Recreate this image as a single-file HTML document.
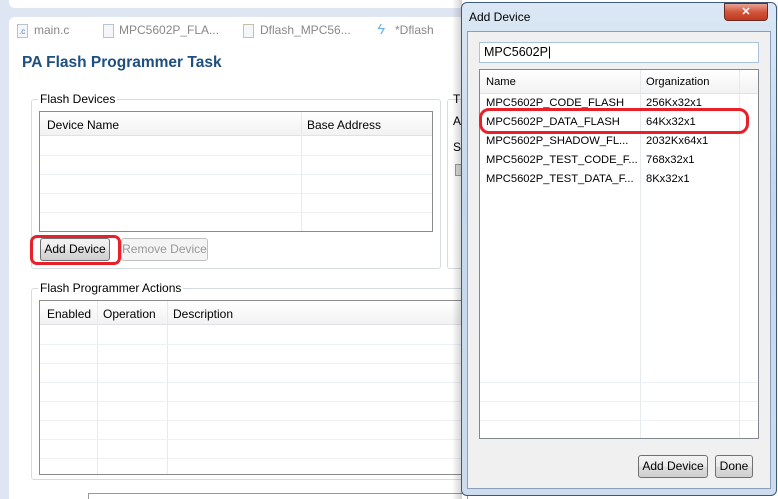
<!DOCTYPE html>
<html><head><style>
*{box-sizing:border-box;margin:0;padding:0}
html,body{width:778px;height:499px;overflow:hidden}
body{background:#dfe6f3;font-family:"Liberation Sans",sans-serif;font-size:12px;color:#000;position:relative}
.a{position:absolute}
.t{position:absolute;white-space:nowrap}
.grp{position:absolute;border:1px solid #d5dbe3;border-radius:3px}
.tbl{position:absolute;border:1px solid #8a8a8a;background:#fff;overflow:hidden}
.hdr{position:absolute;left:0;right:0;top:0;height:24px;background:linear-gradient(#fff,#f2f2f2);border-bottom:1px solid #dfe3e8}
.row{position:absolute;left:0;right:0;height:1px;background:#edf0f4}
.col{position:absolute;top:0;bottom:0;width:1px;background:#e6eaf0}
.btn{position:absolute;border:1px solid #707070;border-radius:3px;background:linear-gradient(#f2f2f2,#ebebeb 50%,#dddddd 51%,#cfcfcf);text-align:center;line-height:20px}
.dl{font-size:11.2px}
</style></head><body>
<div class="a" style="left:9px;top:-5px;width:769px;height:13px;background:#fff;border-radius:6px"></div>
<div class="a" style="left:9px;top:17px;width:769px;height:490px;background:#fff;border-radius:6px"></div>
<div class="a" style="left:17px;top:24px;width:11px;height:14px;border:1px solid #b8c3cf;background:#f4f6f9"></div><div class="t" style="left:19px;top:27px;font-size:8px;color:#4a7fb3">.c</div>
<div class="t" style="left:34px;top:23px;color:#888">main.c</div>
<div class="a" style="left:103px;top:24px;width:11px;height:14px;border:1px solid #b8c3cf;background:#f4f6f9"></div>
<div class="t" style="left:119px;top:23px;color:#888">MPC5602P_FLA...</div>
<div class="a" style="left:243px;top:24px;width:11px;height:14px;border:1px solid #c8c0a8;background:#f4f6f9"></div>
<div class="t" style="left:260px;top:23px;color:#888">Dflash_MPC56...</div>
<div class="t" style="left:377px;top:21px;color:#6fb2ea;font-size:15px;font-style:italic">ϟ</div>
<div class="t" style="left:395px;top:23px;color:#888">*Dflash</div>
<div class="t" style="left:22px;top:54px;font-size:15.5px;font-weight:bold;color:#1f4f80">PA Flash Programmer Task</div>
<div class="grp" style="left:31px;top:99px;width:410px;height:170px"></div>
<div class="t" style="left:38px;top:92px;background:#fff;padding:0 2px">Flash Devices</div>
<div class="tbl" style="left:39px;top:111px;width:394px;height:121px">
<div class="hdr"></div><div class="col" style="left:261px"></div>
<div class="t" style="left:7px;top:6px">Device Name</div><div class="t" style="left:267px;top:6px">Base Address</div>
<div class="row" style="top:43px"></div><div class="row" style="top:62px"></div><div class="row" style="top:81px"></div><div class="row" style="top:100px"></div>
</div>
<div class="btn" style="left:40px;top:238px;width:70px;height:23px">Add Device</div>
<div class="a" style="left:30px;top:235px;width:91px;height:30px;border:3px solid #e8202a;border-radius:7px"></div>
<div class="a" style="left:121px;top:238px;width:87px;height:23px;border:1px solid #c0c0c0;border-radius:3px;background:#f4f4f4;color:#999;text-align:center;line-height:21px">Remove Device</div>
<div class="grp" style="left:447px;top:99px;width:20px;height:170px;border-right:none"></div>
<div class="t" style="left:453px;top:92px">T</div><div class="t" style="left:453px;top:114px">A</div><div class="t" style="left:453px;top:140px">S</div>
<div class="a" style="left:455px;top:164px;width:10px;height:12px;border:1px solid #999;background:#ddd"></div>
<div class="grp" style="left:31px;top:288px;width:450px;height:192px"></div>
<div class="t" style="left:38px;top:281px;background:#fff;padding:0 2px">Flash Programmer Actions</div>
<div class="tbl" style="left:39px;top:300px;width:440px;height:175px">
<div class="hdr"></div><div class="col" style="left:57px"></div><div class="col" style="left:127px"></div>
<div class="t" style="left:7px;top:6px">Enabled</div><div class="t" style="left:63px;top:6px">Operation</div><div class="t" style="left:133px;top:6px">Description</div>
<div class="row" style="top:43px"></div><div class="row" style="top:62px"></div><div class="row" style="top:81px"></div><div class="row" style="top:100px"></div><div class="row" style="top:119px"></div><div class="row" style="top:138px"></div><div class="row" style="top:157px"></div>
</div>
<div class="a" style="left:88px;top:493px;width:380px;height:10px;border:1px solid #999;background:#fff"></div>
<div class="a" style="left:452px;top:0;width:10px;height:499px;background:linear-gradient(to right,rgba(0,0,0,0),rgba(0,0,0,.18))"></div>
<div class="a" style="left:461px;top:2px;width:316px;height:494px;border:1px solid #3f5a78;border-radius:6px;background:linear-gradient(#dbe7f4,#c4d7ec 40%,#cddcee)"></div>
<div class="t" style="left:469px;top:10px;font-size:12px">Add Device</div>
<div class="a" style="left:724px;top:3px;width:44px;height:18px;border:1px solid #6b2a22;border-radius:0 0 4px 4px;background:linear-gradient(#e8a393,#d0553c 50%,#c23a1f);color:#fff;text-align:center;font-weight:bold;font-size:11px;line-height:16px">✕</div>
<div class="a" style="left:467px;top:31px;width:304px;height:458px;background:#f0f0f0;border:1px solid #8ba0b8"></div>
<div class="a" style="left:479px;top:42px;width:280px;height:21px;border:1px solid #a9c3da;background:#fff"></div>
<div class="t" style="left:484px;top:45px;font-size:12.5px">MPC5602P|</div>
<div class="tbl dl" style="left:479px;top:69px;width:280px;height:370px;border-color:#828790">
<div class="hdr" style="height:24px"></div><div class="col" style="left:160px"></div><div class="col" style="left:259px"></div>
<div class="t" style="left:6px;top:6px">Name</div><div class="t" style="left:166px;top:6px">Organization</div>
<div class="t" style="left:6px;top:27px">MPC5602P_CODE_FLASH</div><div class="t" style="left:166px;top:27px">256Kx32x1</div>
<div class="t" style="left:6px;top:46px">MPC5602P_DATA_FLASH</div><div class="t" style="left:166px;top:46px">64Kx32x1</div>
<div class="t" style="left:6px;top:65px">MPC5602P_SHADOW_FL...</div><div class="t" style="left:166px;top:65px">2032Kx64x1</div>
<div class="t" style="left:6px;top:84px">MPC5602P_TEST_CODE_F...</div><div class="t" style="left:166px;top:84px">768x32x1</div>
<div class="t" style="left:6px;top:103px">MPC5602P_TEST_DATA_F...</div><div class="t" style="left:166px;top:103px">8Kx32x1</div>
<div class="row" style="top:312px"></div><div class="row" style="top:331px"></div><div class="row" style="top:350px"></div>
</div>
<div class="a" style="left:479px;top:108px;width:270px;height:26px;border:3px solid #e8202a;border-radius:10px"></div>
<div class="btn" style="left:638px;top:455px;width:70px;height:23px">Add Device</div>
<div class="btn" style="left:715px;top:455px;width:38px;height:23px">Done</div>
</body></html>
